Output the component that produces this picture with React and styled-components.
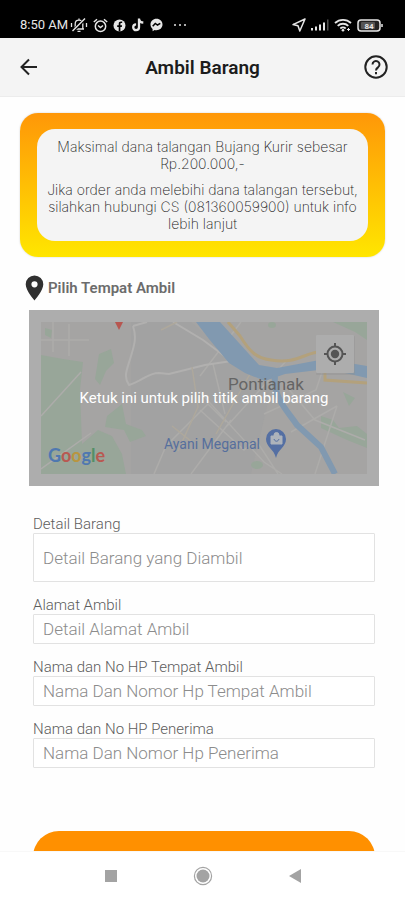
import React from "react";
import styled, { createGlobalStyle } from "styled-components";

const Global = createGlobalStyle`
  *, *::before, *::after { box-sizing: border-box; }
  body { margin: 0; background: #fff; font-family: Roboto, "Liberation Sans", sans-serif; }
  button, input { font-family: inherit; }
`;

const Screen = styled.div`
  display: flex;
  flex-direction: column;
  height: 100vh;
  background: #fefefe;
`;

const StatusBar = styled.div`
  flex: none;
  display: flex;
  align-items: flex-end;
  justify-content: space-between;
  height: 38px;
  padding: 0 22px 5px 20px;
  background: #000;
  color: #e6e6e6;
`;

const StatusGroup = styled.div`
  display: flex;
  align-items: center;
  gap: ${(p) => p.$gap}px;
  height: 16px;
  svg { display: block; flex: none; }
`;

const Clock = styled.span`
  font-size: 13px;
  line-height: 16px;
  font-weight: 400;
  margin-right: -3px;
`;

const Header = styled.header`
  flex: none;
  display: grid;
  grid-template-columns: 28px 1fr 28px;
  align-items: center;
  height: 59px;
  padding: 0 15px;
  background: #f4f4f4;
  border-bottom: 1px solid #ececec;
`;

const Title = styled.h1`
  margin: 0;
  padding-top: 2px;
  text-align: center;
  font-size: 19px;
  line-height: 24px;
  font-weight: 600;
  color: #1c1c1c;
`;

const IconButton = styled.button`
  display: grid;
  place-items: center;
  width: 28px;
  height: 28px;
  padding: 0;
  border: 0;
  background: none;
  cursor: pointer;
  svg { display: block; }
`;

const Main = styled.main`
  flex: 1;
  min-height: 0;
  overflow-y: auto;
  scrollbar-width: none;
  padding: 16px 20px 32px;
`;

const Notice = styled.section`
  padding: 16px 17px;
  border-radius: 18px;
  background: linear-gradient(#ff9708, #ffe600);
  box-shadow: 0 0 2px rgba(0, 0, 0, 0.2);
`;

const NoticeBody = styled.div`
  display: grid;
  gap: 9px;
  padding: 9px 8px;
  border-radius: 18px;
  background: #f4f4f4;
`;

const NoticeText = styled.p`
  margin: 0;
  text-align: center;
  font-family: Inter, "Liberation Sans", sans-serif;
  font-size: 14px;
  line-height: 17px;
  font-weight: 200;
  color: #1c1c1c;
`;

const SectionTitle = styled.h2`
  display: flex;
  align-items: center;
  gap: 4px;
  margin: 18px 0 9px 5px;
  font-size: 15px;
  line-height: 26px;
  font-weight: 600;
  color: #6c6c6c;
  svg { display: block; }
`;

const MapButton = styled.button`
  position: relative;
  display: block;
  width: calc(100% - 15px);
  margin-left: 9px;
  padding: 12px;
  border: 0;
  background: #adadad;
  cursor: pointer;
  > svg { display: block; width: 100%; height: auto; }
`;

const MapHint = styled.span`
  position: absolute;
  inset: 0;
  display: grid;
  place-items: center;
  font-size: 15px;
  line-height: 20px;
  font-weight: 400;
  color: #fff;
`;

const Form = styled.form`
  display: grid;
  gap: 14px;
  margin: 29px 10px 0 13px;
`;

const Field = styled.label`
  display: grid;
  color: #5c5c5c;
  font-size: 15px;
  line-height: 18px;
  font-weight: 350;
`;

const Input = styled.input`
  width: 100%;
  height: ${(p) => (p.$tall ? 49 : 30)}px;
  padding: 0 9px;
  border: 1px solid #e2e2e2;
  border-radius: 1px;
  background: #fff;
  font-size: 17px;
  font-weight: 350;
  color: #333;
  &::placeholder { color: #8c8c8c; opacity: 1; }
`;

const Submit = styled.button`
  height: 52px;
  margin-top: 49px;
  border: 0;
  border-radius: 26px;
  background: #ff9000;
  color: #fff;
  font-size: 14px;
  line-height: 20px;
  font-weight: 500;
  cursor: pointer;
`;

const NavBar = styled.nav`
  flex: none;
  display: flex;
  justify-content: center;
  align-items: center;
  gap: 64px;
  height: 49px;
  background: #fff;
  border-top: 1px solid #f8f8f8;
`;

function StatusIcons() {
  return (
    <StatusGroup $gap={5}>
      <Clock>8:50 AM</Clock>
      <svg width="18" height="16" viewBox="0 0 18 16" fill="none" stroke="currentColor" strokeWidth="1.3">
        <path d="M4 12h10M5.2 11.5V7c0-2.2 1.6-3.8 3.8-3.8S12.8 4.8 12.8 7v4.5M9 1.5v1.5M7.5 14.4h3M1.5 6v4M16.5 6v4" />
        <path d="M15.5 1.5L3 14" stroke="#000" strokeWidth="3" />
        <path d="M15 1.5L2.5 14" strokeWidth="1.5" />
      </svg>
      <svg width="15" height="15" viewBox="0 0 15 15" fill="none" stroke="currentColor" strokeWidth="1.5">
        <circle cx="7.5" cy="8.3" r="5.2" />
        <path d="M.8 4L4 1.3M14.2 4L11 1.3M5 7.5l2.5 2 2.5-2" />
      </svg>
      <svg width="13" height="13" viewBox="0 0 13 13">
        <circle cx="6.5" cy="6.5" r="6" fill="currentColor" />
        <path d="M5.7 12.6V8H4.2V6.3h1.5V5c0-1.6.9-2.4 2.3-2.4h1.2v1.5h-.8c-.7 0-1 .3-1 1v1.2h1.7L8.8 8H7.4v4.6z" fill="#000" />
      </svg>
      <svg width="14" height="14" viewBox="0 0 14 14" fill="none" stroke="currentColor" strokeWidth="2.3">
        <path d="M8 .5v8.8a2.9 2.9 0 1 1-2.9-2.9M8 .8c.2 2.4 1.8 3.6 4.3 3.7" />
      </svg>
      <svg width="13" height="14" viewBox="0 0 13 14">
        <path d="M6.5.8C3 .8.5 3.3.5 6.6c0 1.9.8 3.4 2.1 4.4v2.2l2-1.1c3.9 1 7.9-1.4 7.9-5.5 0-3.3-2.5-5.8-6-5.8z" fill="currentColor" />
        <path d="M2.7 8.3l2.6-2.9 2.2 1.6 2.8-1.7" fill="none" stroke="#000" strokeWidth="1.5" />
      </svg>
      <svg width="22" height="4" viewBox="0 0 22 4" fill="currentColor">
        <circle cx="7" cy="2" r="1" /><circle cx="12" cy="2" r="1" /><circle cx="17" cy="2" r="1" />
      </svg>
    </StatusGroup>
  );
}

function SystemIcons() {
  return (
    <StatusGroup $gap={5}>
      <svg width="14" height="14" viewBox="0 0 14 14" fill="none" stroke="currentColor" strokeWidth="1.5" strokeLinejoin="round">
        <path d="M13 1L1 6.6l5 1.2 1.8 5.2z" />
      </svg>
      <svg width="18" height="12" viewBox="0 0 18 12" fill="currentColor">
        <path d="M0 9h2v2.5H0zM4 7.5h2v4H4zM8 5.5h2v6H8zM12 3.5h2v8h-2z" />
        <path d="M16 .5h1.500v11H16z" opacity=".35" />
      </svg>
      <svg width="18" height="14" viewBox="0 0 18 14" fill="none" stroke="currentColor" strokeWidth="1.8">
        <path d="M1 5c4.5-4.3 11.5-4.3 16 0M3.7 7.9c3-2.9 7.6-2.9 10.6 0M6.3 10.5c1.6-1.4 3.8-1.4 5.4 0" />
        <circle cx="9" cy="12.2" r="1.3" fill="currentColor" stroke="none" />
        <path d="M13 11.5h3M14.5 10v3" strokeWidth="1" />
      </svg>
      <svg width="26" height="13" viewBox="0 0 26 13">
        <rect x="1" y="1" width="22" height="11" rx="3" fill="#222" stroke="currentColor" strokeWidth="1.5" />
        <rect x="4" y="3" width="14" height="7" rx="1" fill="#555" />
        <path d="M25 5v3" stroke="currentColor" strokeWidth="1.5" />
        <text x="12" y="9.5" textAnchor="middle" fontFamily="Roboto" fontSize="8" fontWeight="700" fill="currentColor">84</text>
      </svg>
    </StatusGroup>
  );
}

function MapDrawing() {
  return (
    <svg viewBox="0 0 326 152" fontFamily="Roboto, sans-serif">
      <rect width="326" height="152" fill="#a5a4a3" />
      <path d="M90 0h60l80 68-20 84H90z" fill="#a2a2a2" />
      <g fill="#98a699">
        <path d="M0 33l22 4 20 3-3 28 2 54 16-14 14 6 10 18 4 20H0z" />
        <path d="M58 32l12-5 3 14-8 8-6 14-5-6z" />
        <path d="M66 94l15-12 4 20 16 6 4 6-16 6-6-12-19-3z" />
        <path d="M4 6l7 2-1 8-6-3zM292 0h34v18l-12-8zM280 94l12 4 6 8 18-2 10 8v14l-20-8-26-12zM302 70l12 6-6 8z" />
        <ellipse cx="216" cy="143" rx="6" ry="4" /><ellipse cx="231" cy="3" rx="4" ry="3" />
      </g>
      <g fill="none" stroke="#adacaa" strokeWidth="1.5">
        <path d="M0 94L40 50M0 147l50-36M113 152l12-28 42-42 18 18M200 0L159 54M159 88l44 40 12-10 22 34M172 42l12 50M159 70l64 70 18 12M223 92l52-24 16-48M186 104l60-66M0 18h48M12 0v30M28 2v32M150 152l40-54M240 58l34 40 50 20M250 110l46-26M296 84l-22 68" />
      </g>
      <path d="M92 4c4 12 1 20-2 30-4 14-8 20-2 29 14-4 18-12 30-12l10 1 36-9 40-6M92 4l14-4M132 0l30 18 35 26" fill="none" stroke="#b1b0af" strokeWidth="2" />
      <g fill="none" stroke="#aea89c" strokeWidth="1.5">
        <path d="M151 45l6 40-20 44M131 104l20 16M209 52l-34 60M120 8l16-8" />
      </g>
      <path d="M155 0h24l39 43 18 3 48-9 42 7v12l-40-9-42 5-20 7-20-8-16-10-20-24z" fill="#8199b0" />
      <path d="M234 54c-2 22 12 34 22 49l24 22 14 27" fill="none" stroke="#8199b0" strokeWidth="6" />
      <path d="M187 0l12 14c10 16 16 22 31 24 28 5 35-10 54-8M284 30v28l42 3" fill="none" stroke="#b3a17c" strokeWidth="3" />
      <path d="M74 0h8l-4 8z" fill="#b75650" />
      <text x="187" y="68" fontSize="17" fontWeight="400" fill="#656565">Pontianak</text>
      <text x="123" y="127" fontSize="14" fill="#566f9d">Ayani Megamal</text>
      <path d="M235 136c-2-9-10-11-10-19a10 10 0 0 1 20 0c0 8-8 10-10 19z" fill="#546fa3" />
      <path d="M230 114h11v8h-11zM233 115v-2a2.5 2.5 0 0 1 5 0v2" fill="#adb3bb" stroke="#adb3bb" />
      <path d="M233 117c1 3 4 3 5 0" fill="none" stroke="#546fa3" />
      <rect x="275" y="14" width="39" height="39" rx="1" fill="#919191" opacity=".4" />
      <rect x="275" y="13" width="38" height="38" rx="1" fill="#adadad" />
      <g fill="none" stroke="#555" strokeWidth="2">
        <circle cx="294" cy="32" r="7.5" />
        <path d="M294 21v4M294 39v4M283 32h4M301 32h4" />
      </g>
      <circle cx="294" cy="32" r="4.2" fill="#555" />
      <text x="7" y="140" fontSize="18" fontFamily="Lato, sans-serif" fontWeight="700">
        <tspan fill="#4f78b0">G</tspan><tspan fill="#b85952">o</tspan><tspan fill="#b99540">o</tspan><tspan fill="#4f78b0">g</tspan><tspan fill="#539067">l</tspan><tspan fill="#b85952">e</tspan>
      </text>
    </svg>
  );
}

const fields = [
  { label: "Detail Barang", placeholder: "Detail Barang yang Diambil", tall: true },
  { label: "Alamat Ambil", placeholder: "Detail Alamat Ambil" },
  { label: "Nama dan No HP Tempat Ambil", placeholder: "Nama Dan Nomor Hp Tempat Ambil" },
  { label: "Nama dan No HP Penerima", placeholder: "Nama Dan Nomor Hp Penerima" },
];

export default function App() {
  return (
    <Screen>
      <Global />
      <StatusBar>
        <StatusIcons />
        <SystemIcons />
      </StatusBar>
      <Header>
        <IconButton aria-label="Kembali">
          <svg width="18" height="18" viewBox="0 0 18 18" fill="none" stroke="#222" strokeWidth="2">
            <path d="M17 9H2M9 1.5L1.5 9 9 16.5" />
          </svg>
        </IconButton>
        <Title>Ambil Barang</Title>
        <IconButton aria-label="Bantuan">
          <svg width="24" height="24" viewBox="0 0 24 24" fill="none" stroke="#222" strokeWidth="2">
            <circle cx="12" cy="12" r="10.7" />
            <path d="M8.5 9.5a3.5 3.5 0 1 1 5.6 2.8C12.6 13.4 12 13.8 12 15.5M12 17v2.2" />
          </svg>
        </IconButton>
      </Header>
      <Main>
        <Notice>
          <NoticeBody>
            <NoticeText>Maksimal dana talangan Bujang Kurir sebesar Rp.200.000,-</NoticeText>
            <NoticeText>Jika order anda melebihi dana talangan tersebut, silahkan hubungi CS (081360059900) untuk info lebih lanjut</NoticeText>
          </NoticeBody>
        </Notice>
        <SectionTitle>
          <svg width="19" height="26" viewBox="0 0 19 26" fill="#303030">
            <path fillRule="evenodd" d="M9.5.5a8.8 8.8 0 0 0-8.8 8.8C.7 16 9.5 25.5 9.5 25.5S18.3 16 18.3 9.3A8.8 8.8 0 0 0 9.5.5zm0 5.7a3.1 3.1 0 1 1 0 6.2 3.1 3.1 0 0 1 0-6.2z" />
          </svg>
          Pilih Tempat Ambil
        </SectionTitle>
        <MapButton type="button">
          <MapDrawing />
          <MapHint>Ketuk ini untuk pilih titik ambil barang</MapHint>
        </MapButton>
        <Form onSubmit={(e) => e.preventDefault()}>
          {fields.map((f) => (
            <Field key={f.label}>
              {f.label}
              <Input type="text" placeholder={f.placeholder} $tall={f.tall} />
            </Field>
          ))}
          <Submit type="submit">LANJUTKAN</Submit>
        </Form>
      </Main>
      <NavBar>
        <IconButton aria-label="Aplikasi terbaru">
          <svg width="12" height="12" viewBox="0 0 12 12"><path d="M0 0h12v12H0z" fill="#a3a3a3" /></svg>
        </IconButton>
        <IconButton aria-label="Beranda">
          <svg width="20" height="20" viewBox="0 0 20 20">
            <circle cx="10" cy="10" r="8.6" fill="none" stroke="#a3a3a3" strokeWidth="1.2" />
            <circle cx="10" cy="10" r="6.5" fill="#a3a3a3" />
          </svg>
        </IconButton>
        <IconButton aria-label="Kembali ke layar sebelumnya">
          <svg width="12" height="14" viewBox="0 0 12 14"><path d="M12 0v14L0 7z" fill="#a3a3a3" /></svg>
        </IconButton>
      </NavBar>
    </Screen>
  );
}
